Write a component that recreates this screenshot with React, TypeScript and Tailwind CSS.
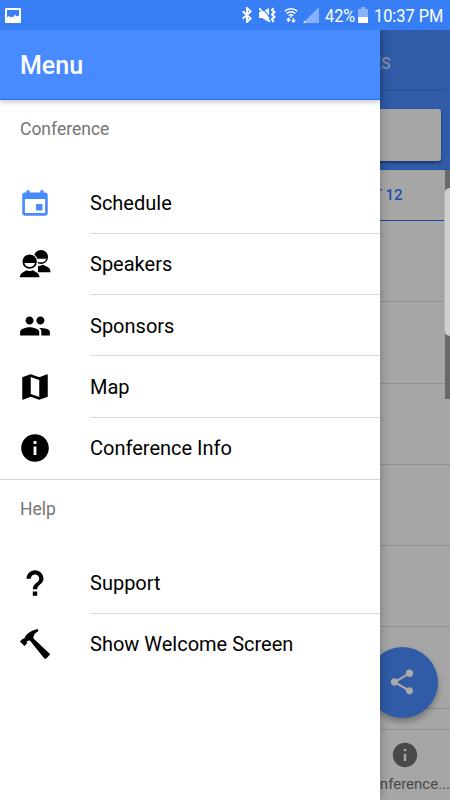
import type { ComponentType, ReactNode } from "react";
import {
  IoMdCalendar,
  IoMdPeople,
  IoMdMap,
  IoMdInformationCircle,
  IoMdHelp,
  IoMdHammer,
  IoMdShare,
} from "react-icons/io";

type IconType = ComponentType<{ className?: string }>;

interface MenuItem {
  label: string;
  icon: IconType;
  active?: boolean;
}

function SpeakersIcon({ className }: { className?: string }) {
  return (
    <svg viewBox="0 0 102 102" className={className} fill="currentColor">
      <circle cx="69" cy="30" r="21" />
      <path d="M53 35h32c-2 7-8 11-16 11s-14-4-16-11Z" fill="#fff" />
      <path d="M60 76V58l16-5c3 4 13 5 17 10 3 3 4 8 5 13Z" />
      <circle cx="35" cy="44" r="25" fill="#fff" />
      <circle cx="35" cy="44" r="21.500" />
      <path d="M19 48h32c-2 8-8 12-16 12s-14-4-16-12Z" fill="#fff" />
      <path d="M24 67c7 4 15 4 22 0l6 4c8 3 13 8 15 18H3c2-10 7-15 15-18Z" fill="#fff" />
      <path d="M5 91c2-9 5-14 13-17l7-4c6 3 14 3 20 0l7 4c8 3 11 8 13 17Z" />
    </svg>
  );
}

const conferenceItems: MenuItem[] = [
  { label: "Schedule", icon: IoMdCalendar, active: true },
  { label: "Speakers", icon: SpeakersIcon },
  { label: "Sponsors", icon: IoMdPeople },
  { label: "Map", icon: IoMdMap },
  { label: "Conference Info", icon: IoMdInformationCircle },
];

const helpItems: MenuItem[] = [
  { label: "Support", icon: IoMdHelp },
  { label: "Show Welcome Screen", icon: IoMdHammer },
];

function StatusBar() {
  return (
    <header className="relative z-30 flex h-[30px] items-center bg-[#387ff5] pl-[5px] pr-[7px] text-white">
      <svg viewBox="0 0 16 15" className="h-[15px] w-4" fill="currentColor">
        <path
          fillRule="evenodd"
          d="M1 0h14a1 1 0 0 1 1 1v13a1 1 0 0 1-1 1H1a1 1 0 0 1-1-1V1a1 1 0 0 1 1-1Zm1 2v7.500l1.500-1.500 2 1.500 1.500-1 1 1L10 6.500l1.500 2L13 7.500l1 1V2H2Z"
        />
      </svg>
      <div className="ml-auto flex items-center">
        <svg viewBox="0 0 10 16" className="h-4 w-2.5" fill="none" stroke="currentColor" strokeWidth="1.900">
          <path d="m.7 4.300 8 7.200L5 15V1l3.700 3.500-8 7.200" />
        </svg>
        <svg viewBox="0 0 17 16" className="ml-[7px] h-4 w-[17px]" fill="none" stroke="currentColor">
          <path d="M0 5h3l7-4v14l-7-4H0Z" fill="currentColor" stroke="none" />
          <path d="m2.500 0 10 12.500" stroke="#387ff5" strokeWidth="1.200" />
          <path d="m.3 1.200 10.700 13.500" strokeWidth="1.700" />
          <path d="m14.500 1-1.500 2 2.500 2L13 7.500 15.500 10 13 12l1.500 3" strokeWidth="2" />
        </svg>
        <svg viewBox="0 0 14 16" className="ml-2 h-4 w-3.5" fill="none" stroke="currentColor" strokeWidth="1.500">
          <path d="M.7 4.200a9 9 0 0 1 12.600 0M2.700 6.600a6 6 0 0 1 8.600 0M4.700 8.700a3.500 3.500 0 0 1 4.600 0" />
          <path d="M7 9.200v1.600" />
          <path d="M4.500 11.500V15M9.500 11v4M2.800 13.300l1.700-1.700 1.700 1.700M7.800 13.300l1.700 1.700 1.700-1.700" strokeWidth="1.400" />
        </svg>
        <svg viewBox="0 0 16 16" className="ml-[5px] h-4 w-4" fill="currentColor">
          <path d="M16 0v16H0Z" opacity=".4" />
          <path d="M2.500 13.500V16H0Z" />
        </svg>
        <span className="ml-1.5 w-[30px] pt-px text-[19px] leading-[29px]">
          <span className="inline-block origin-left scale-x-[.86]">42%</span>
        </span>
        <svg viewBox="0 0 10 16" className="ml-[3px] h-4 w-2.5" fill="currentColor">
          <path d="M3 0h4v2h3v8H0V2h3Z" opacity=".4" />
          <path d="M0 10h10v6H0Z" />
        </svg>
        <span className="ml-1.5 w-[69px] whitespace-nowrap pt-px text-[19px] leading-[29px]">
          <span className="inline-block origin-left scale-x-[.86]">10:37 PM</span>
        </span>
      </div>
    </header>
  );
}

function SchedulePage() {
  return (
    <main className="relative flex h-[770px] flex-col bg-[#a6a6a6]">
      <div className="flex h-[140px] flex-col border-b border-[#1d55b0] bg-[#2f5ba7]">
        <div className="mr-[5px] flex h-[61px] items-center justify-end border-b-2 border-[#2b539a] pr-[54.500px] pt-2 text-[17px] font-medium text-[#8290ad]">
          <span className="inline-block origin-right scale-x-[.88]">FAVORITES</span>
        </div>
        <div className="mx-[9px] mt-[18px] h-[52px] rounded-[3px] bg-[#a6a6a6] shadow-[0_2px_3px_rgba(0,0,0,.4)]" />
      </div>
      <div className="flex h-[51px] items-center justify-end border-b border-[#1648a0] pr-[47.500px] pt-px text-[15px] font-medium text-[#1d51a8]">
        OCT 12
      </div>
      <div className="flex-1 overflow-hidden">
        {[0, 1, 2, 3, 4, 5].map((i) => (
          <div key={i} className="h-[81.300px] border-b-[1.500px] border-[#909090]" />
        ))}
      </div>
      <footer className="flex h-[71px] flex-col items-end border-t border-[#929292] text-[#494949]">
        <IoMdInformationCircle className="mr-[30px] mt-[10px] size-[30px]" />
        <span className="mt-[3px] text-[15px] leading-[22px]">Conference...</span>
      </footer>

      <button className="absolute left-[367px] top-[617px] flex size-[70.500px] items-center justify-center rounded-full bg-[#2f5ba7] text-[#a9a9a9] shadow-[0_4px_6px_rgba(0,0,0,.3)]">
        <IoMdShare className="size-[30px]" />
      </button>
      {/* Edge strip and its handle */}
      <div className="absolute right-0 top-[140px] h-[229px] w-[5px] bg-[#686868]" />
      <div className="absolute right-0 top-[158px] h-[148px] w-1.5 rounded-l-md border-l border-[#b9b9b9] bg-[#cecece]" />
    </main>
  );
}

function MenuRow({ item, last }: { item: MenuItem; last: boolean }) {
  const Icon = item.icon;
  return (
    <li className="flex h-[61.250px] items-center pl-[18px]">
      <Icon className={item.active ? "size-[34px] shrink-0 text-[#488aff]" : "size-[34px] shrink-0 text-black"} />
      <span
        className={
          last
            ? "ml-[38px] flex h-full flex-1 items-center text-[20px]"
            : "ml-[38px] flex h-full flex-1 items-center border-b border-[#dadada] pt-px text-[20px]"
        }
      >
        {item.label}
      </span>
    </li>
  );
}

function MenuSection({ title, items, children }: { title: string; items: MenuItem[]; children?: ReactNode }) {
  return (
    <section>
      <h2 className="h-[72.500px] pl-5 pt-[17px] text-[17.500px] leading-6 text-[#757575]">{title}</h2>
      <ul>
        {items.map((item, i) => (
          <MenuRow key={item.label} item={item} last={i === items.length - 1} />
        ))}
      </ul>
      {children}
    </section>
  );
}

function SideMenu() {
  return (
    <nav className="absolute left-0 top-[30px] z-20 h-[770px] w-[380px] bg-white text-black shadow-[0_0_10px_rgba(0,0,0,.3)]">
      <div className="flex h-[70px] items-center border-b border-[#1c74f0] bg-[#488aff] pl-5 pt-0.5 text-[25px] font-medium text-white shadow-[0_2px_5px_rgba(0,0,0,.22)]">
        Menu
      </div>
      <MenuSection title="Conference" items={conferenceItems}>
        <hr className="border-[#d3d3d3]" />
      </MenuSection>
      <MenuSection title="Help" items={helpItems} />
    </nav>
  );
}

export default function App() {
  return (
    <div className="relative h-[800px] w-[450px] overflow-hidden font-[Roboto,sans-serif]">
      <StatusBar />
      <SchedulePage />
      <SideMenu />
    </div>
  );
}
